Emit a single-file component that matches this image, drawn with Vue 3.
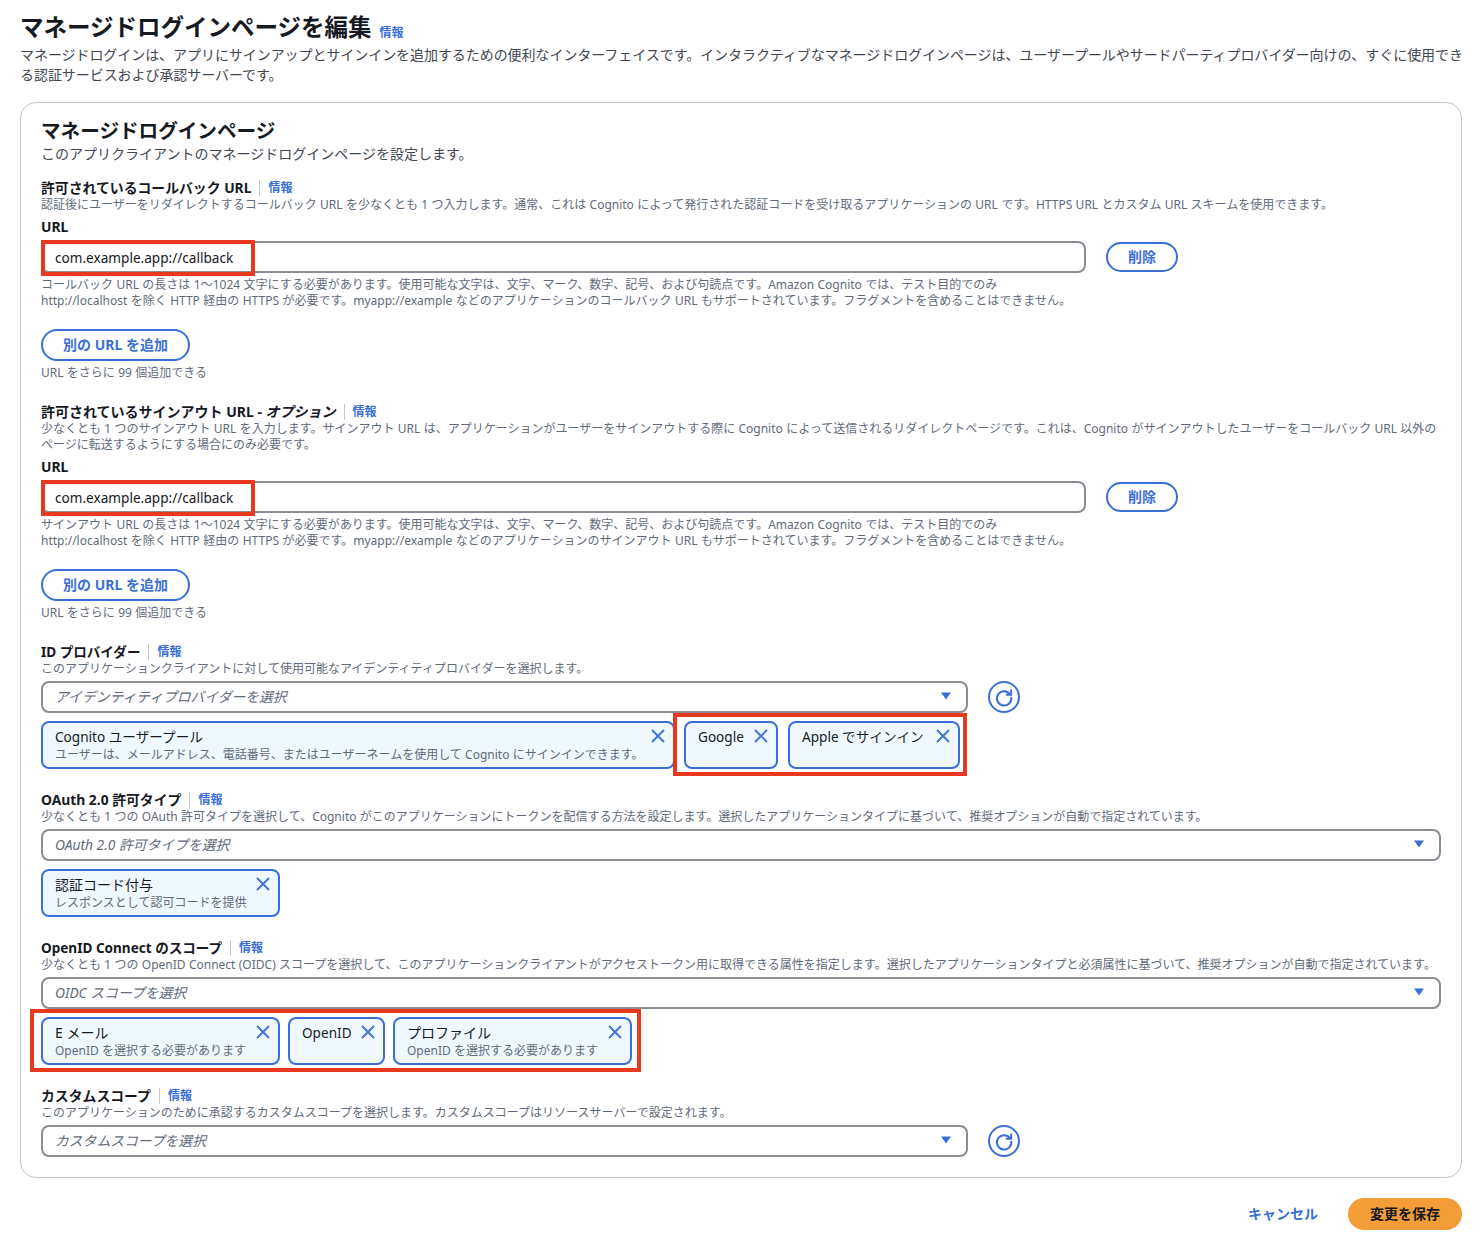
<script setup>
const cbHint1 = 'コールバック URL の長さは 1～1024 文字にする必要があります。使用可能な文字は、文字、マーク、数字、記号、および句読点です。Amazon Cognito では、テスト目的でのみ'
const cbHint2 = 'http://localhost を除く HTTP 経由の HTTPS が必要です。myapp://example などのアプリケーションのコールバック URL もサポートされています。フラグメントを含めることはできません。'
const outHint1 = 'サインアウト URL の長さは 1～1024 文字にする必要があります。使用可能な文字は、文字、マーク、数字、記号、および句読点です。Amazon Cognito では、テスト目的でのみ'
const outHint2 = 'http://localhost を除く HTTP 経由の HTTPS が必要です。myapp://example などのアプリケーションのサインアウト URL もサポートされています。フラグメントを含めることはできません。'
</script>

<template>
  <div class="page">
    <div class="title-row">
      <h1>マネージドログインページを編集</h1>
      <a class="info">情報</a>
    </div>
    <p class="page-desc">マネージドログインは、アプリにサインアップとサインインを追加するための便利なインターフェイスです。インタラクティブなマネージドログインページは、ユーザープールやサードパーティプロバイダー向けの、すぐに使用できる認証サービスおよび承認サーバーです。</p>

    <div class="card">
      <h2>マネージドログインページ</h2>
      <p class="card-desc">このアプリクライアントのマネージドログインページを設定します。</p>

      <div class="field first">
        <div class="label-row"><span class="label">許可されているコールバック URL</span><a class="info small">情報</a></div>
        <p class="desc">認証後にユーザーをリダイレクトするコールバック URL を少なくとも 1 つ入力します。通常、これは Cognito によって発行された認証コードを受け取るアプリケーションの URL です。HTTPS URL とカスタム URL スキームを使用できます。</p>
        <div class="label url-label">URL</div>
        <div class="url-row">
          <div class="input">
            <span class="value">com.example.app://callback</span>
            <span class="mark mark-input"></span>
          </div>
          <button class="btn del">削除</button>
        </div>
        <p class="desc hint">{{ cbHint1 }}<br>{{ cbHint2 }}</p>
        <button class="btn add">別の URL を追加</button>
        <p class="desc note">URL をさらに 99 個追加できる</p>
      </div>

      <div class="field">
        <div class="label-row"><span class="label full">許可されているサインアウト URL - <i>オプション</i></span><a class="info small">情報</a></div>
        <p class="desc">少なくとも 1 つのサインアウト URL を入力します。サインアウト URL は、アプリケーションがユーザーをサインアウトする際に Cognito によって送信されるリダイレクトページです。これは、Cognito がサインアウトしたユーザーをコールバック URL 以外のページに転送するようにする場合にのみ必要です。</p>
        <div class="label url-label">URL</div>
        <div class="url-row">
          <div class="input">
            <span class="value">com.example.app://callback</span>
            <span class="mark mark-input"></span>
          </div>
          <button class="btn del">削除</button>
        </div>
        <p class="desc hint">{{ outHint1 }}<br>{{ outHint2 }}</p>
        <button class="btn add">別の URL を追加</button>
        <p class="desc note">URL をさらに 99 個追加できる</p>
      </div>

      <div class="field">
        <div class="label-row"><span class="label narrow">ID プロバイダー</span><a class="info small">情報</a></div>
        <p class="desc">このアプリケーションクライアントに対して使用可能なアイデンティティプロバイダーを選択します。</p>
        <div class="select-row">
          <div class="select short">
            <span>アイデンティティプロバイダーを選択</span>
            <svg class="caret" viewBox="0 0 12 8"><path d="M1 0.5h10L6 7.5z" /></svg>
          </div>
          <button class="refresh">
            <svg viewBox="0 0 32 32"><circle cx="16" cy="16" r="15" class="ring" /><path d="M22 13.2A7.2 7.2 0 1 0 23.2 16" class="spin" /><path d="M23.2 8.6v5.2H18" class="spin" /></svg>
          </button>
        </div>
        <div class="chips">
          <div class="chip cognito">
            <div><div class="chip-name">Cognito ユーザープール</div><div class="chip-sub">ユーザーは、メールアドレス、電話番号、またはユーザーネームを使用して Cognito にサインインできます。</div></div>
            <svg class="x" viewBox="0 0 16 16"><path d="M2 2l12 12M14 2L2 14" /></svg>
          </div>
          <div class="chip-group">
            <div class="chip google">
              <div class="chip-name">Google</div>
              <svg class="x" viewBox="0 0 16 16"><path d="M2 2l12 12M14 2L2 14" /></svg>
            </div>
            <div class="chip apple">
              <div class="chip-name">Apple でサインイン</div>
              <svg class="x" viewBox="0 0 16 16"><path d="M2 2l12 12M14 2L2 14" /></svg>
            </div>
            <span class="mark mark-idp"></span>
          </div>
        </div>
      </div>

      <div class="field">
        <div class="label-row"><span class="label">OAuth 2.0 許可タイプ</span><a class="info small">情報</a></div>
        <p class="desc">少なくとも 1 つの OAuth 許可タイプを選択して、Cognito がこのアプリケーションにトークンを配信する方法を設定します。選択したアプリケーションタイプに基づいて、推奨オプションが自動で指定されています。</p>
        <div class="select">
          <span>OAuth 2.0 許可タイプを選択</span>
          <svg class="caret" viewBox="0 0 12 8"><path d="M1 0.5h10L6 7.5z" /></svg>
        </div>
        <div class="chips">
          <div class="chip wide">
            <div><div class="chip-name">認証コード付与</div><div class="chip-sub">レスポンスとして認可コードを提供</div></div>
            <svg class="x" viewBox="0 0 16 16"><path d="M2 2l12 12M14 2L2 14" /></svg>
          </div>
        </div>
      </div>

      <div class="field">
        <div class="label-row"><span class="label narrow">OpenID Connect のスコープ</span><a class="info small">情報</a></div>
        <p class="desc">少なくとも 1 つの OpenID Connect (OIDC) スコープを選択して、このアプリケーションクライアントがアクセストークン用に取得できる属性を指定します。選択したアプリケーションタイプと必須属性に基づいて、推奨オプションが自動で指定されています。</p>
        <div class="select">
          <span>OIDC スコープを選択</span>
          <svg class="caret" viewBox="0 0 12 8"><path d="M1 0.5h10L6 7.5z" /></svg>
        </div>
        <div class="chips scopes">
          <div class="chip wide">
            <div><div class="chip-name">E メール</div><div class="chip-sub">OpenID を選択する必要があります</div></div>
            <svg class="x" viewBox="0 0 16 16"><path d="M2 2l12 12M14 2L2 14" /></svg>
          </div>
          <div class="chip openid">
            <div class="chip-name">OpenID</div>
            <svg class="x" viewBox="0 0 16 16"><path d="M2 2l12 12M14 2L2 14" /></svg>
          </div>
          <div class="chip wide">
            <div><div class="chip-name">プロファイル</div><div class="chip-sub">OpenID を選択する必要があります</div></div>
            <svg class="x" viewBox="0 0 16 16"><path d="M2 2l12 12M14 2L2 14" /></svg>
          </div>
          <span class="mark mark-scopes"></span>
        </div>
      </div>

      <div class="field">
        <div class="label-row"><span class="label">カスタムスコープ</span><a class="info small">情報</a></div>
        <p class="desc">このアプリケーションのために承認するカスタムスコープを選択します。カスタムスコープはリソースサーバーで設定されます。</p>
        <div class="select-row">
          <div class="select short">
            <span>カスタムスコープを選択</span>
            <svg class="caret" viewBox="0 0 12 8"><path d="M1 0.5h10L6 7.5z" /></svg>
          </div>
          <button class="refresh">
            <svg viewBox="0 0 32 32"><circle cx="16" cy="16" r="15" class="ring" /><path d="M22 13.2A7.2 7.2 0 1 0 23.2 16" class="spin" /><path d="M23.2 8.6v5.2H18" class="spin" /></svg>
          </button>
        </div>
      </div>
    </div>

    <div class="footer">
      <a class="cancel">キャンセル</a>
      <button class="save">変更を保存</button>
    </div>
  </div>
</template>

<style scoped>
.page {
  padding: 12px 22px 20px 20px;
  font-family: "Noto Sans", "Noto Sans CJK JP", sans-serif;
  color: #16191f;
  box-sizing: border-box;
  width: 1484px;
}

.title-row {
  display: flex;
  align-items: center;
  height: 30px;
}

h1 {
  margin: 0;
  font-size: 23.5px;
  line-height: 30px;
  font-weight: 700;
}

.info {
  color: #3a6fd8;
  font-size: 12px;
  font-weight: 700;
  margin-left: 8px;
  margin-top: 12px;
  line-height: 16px;
}

.page-desc {
  margin: 3px -2px 0 0;
  font-size: 14px;
  line-height: 20px;
  color: #414750;
  letter-spacing: -0.06px;
}

.card {
  margin-top: 17px;
  border: 1px solid #c6c6cd;
  border-radius: 16px;
  padding: 15px 20px 20px;
  box-sizing: border-box;
}

h2 {
  margin: 0;
  font-size: 19.6px;
  line-height: 26px;
  font-weight: 700;
}

.card-desc {
  margin: 0;
  font-size: 14px;
  line-height: 20px;
  color: #414750;
}

.field {
  margin-top: 22px;
}

.field.first {
  margin-top: 15px;
}

.label-row {
  display: flex;
  align-items: center;
  height: 18px;
}

.label {
  font-size: 13.85px;
  line-height: 18px;
  font-weight: 700;
}

.label.full {
  font-size: 14px;
}

.label.narrow {
  font-size: 13.55px;
}

.label-row .info {
  margin: 0 0 0 8px;
  padding-left: 8px;
  border-left: 1px solid #c6c6cd;
  height: 16px;
}

.desc {
  margin: 0;
  font-size: 12px;
  line-height: 16px;
  color: #5f6b7a;
  word-spacing: 0.2px;
}

.url-label {
  margin-top: 5px;
}

.url-row {
  display: flex;
  align-items: center;
  margin-top: 5px;
}

.input {
  position: relative;
  width: 1045px;
  height: 32px;
  border: 2px solid #8c8c94;
  border-radius: 8px;
  box-sizing: border-box;
  display: flex;
  align-items: center;
  padding: 1px 0 0 12px;
  font-size: 13.6px;
}

.btn {
  font-family: inherit;
  background: #fff;
  color: #3a6fd8;
  border: 2px solid #3a6fd8;
  border-radius: 16px;
  font-size: 14px;
  font-weight: 700;
  padding: 0;
  box-sizing: border-box;
  display: block;
}

.del {
  width: 72px;
  height: 30px;
  margin-left: 20px;
  padding-bottom: 2px;
}

.hint {
  margin-top: 4px;
  word-spacing: 0.3px;
}

.add {
  width: 149px;
  height: 32px;
  margin-top: 20px;
  padding-bottom: 2px;
}

.note {
  margin-top: 4px;
}

.mark {
  position: absolute;
  border: 4px solid #e8391f;
  box-sizing: border-box;
  pointer-events: none;
}

.mark-input {
  left: -2px;
  top: -3px;
  width: 214px;
  height: 36px;
}

.select-row {
  display: flex;
  align-items: center;
  gap: 20px;
}

.select {
  display: flex;
  align-items: center;
  justify-content: space-between;
  height: 32px;
  margin-top: 4px;
  border: 2px solid #8c8c94;
  border-radius: 8px;
  box-sizing: border-box;
  padding: 0 14px 2px 12px;
  font-size: 13.8px;
  font-style: italic;
  color: #5f6b7a;
}

.select.short {
  width: 927px;
}

.caret {
  width: 12px;
  height: 8px;
  fill: #3a6fd8;
}

.refresh {
  width: 32px;
  height: 32px;
  margin-top: 4px;
  padding: 0;
  border: 0;
  background: none;
}

.refresh svg {
  display: block;
  width: 32px;
  height: 32px;
  fill: none;
  stroke: #3a6fd8;
}

.ring {
  stroke-width: 2;
}

.spin {
  stroke-width: 2;
}

.chips {
  position: relative;
  display: flex;
  margin-top: 8px;
  gap: 8px;
}

.chip-group {
  position: relative;
  display: flex;
  gap: 10px;
  margin-left: 1px;
}

.chip {
  display: flex;
  justify-content: space-between;
  align-items: flex-start;
  height: 48px;
  box-sizing: border-box;
  border: 2px solid #3a6fd8;
  border-radius: 8px;
  background: #f0f8ff;
  padding: 4px 2px 0 12px;
}

.chip-name {
  font-size: 13.6px;
  line-height: 20px;
}

.wide .chip-name {
  font-size: 14px;
}

.chip-sub {
  font-size: 12px;
  line-height: 16px;
  color: #5f6b7a;
  white-space: nowrap;
  word-spacing: 0.2px;
}

.x {
  flex: none;
  width: 16px;
  height: 16px;
  margin: 1px 5px 0 0;
  fill: none;
  stroke: #3a6fd8;
  stroke-width: 1.8;
}

.cognito {
  width: 634px;
}

.google {
  width: 94px;
}

.apple {
  width: 172px;
}

.wide {
  width: 239px;
}

.openid {
  width: 97px;
}

.mark-idp {
  left: -11px;
  top: -8px;
  width: 294px;
  height: 63px;
}

.mark-scopes {
  left: -11px;
  top: -8px;
  width: 611px;
  height: 63px;
}

.footer {
  display: flex;
  justify-content: flex-end;
  align-items: center;
  margin-top: 20px;
}

.cancel {
  color: #3a6fd8;
  font-size: 14px;
  font-weight: 700;
  margin-right: 30px;
  padding-bottom: 2px;
}

.save {
  font-family: inherit;
  width: 114px;
  height: 32px;
  border: 0;
  border-radius: 16px;
  background: #f29d38;
  color: #16191f;
  font-size: 14px;
  font-weight: 700;
  padding: 0 0 2px;
}
</style>
